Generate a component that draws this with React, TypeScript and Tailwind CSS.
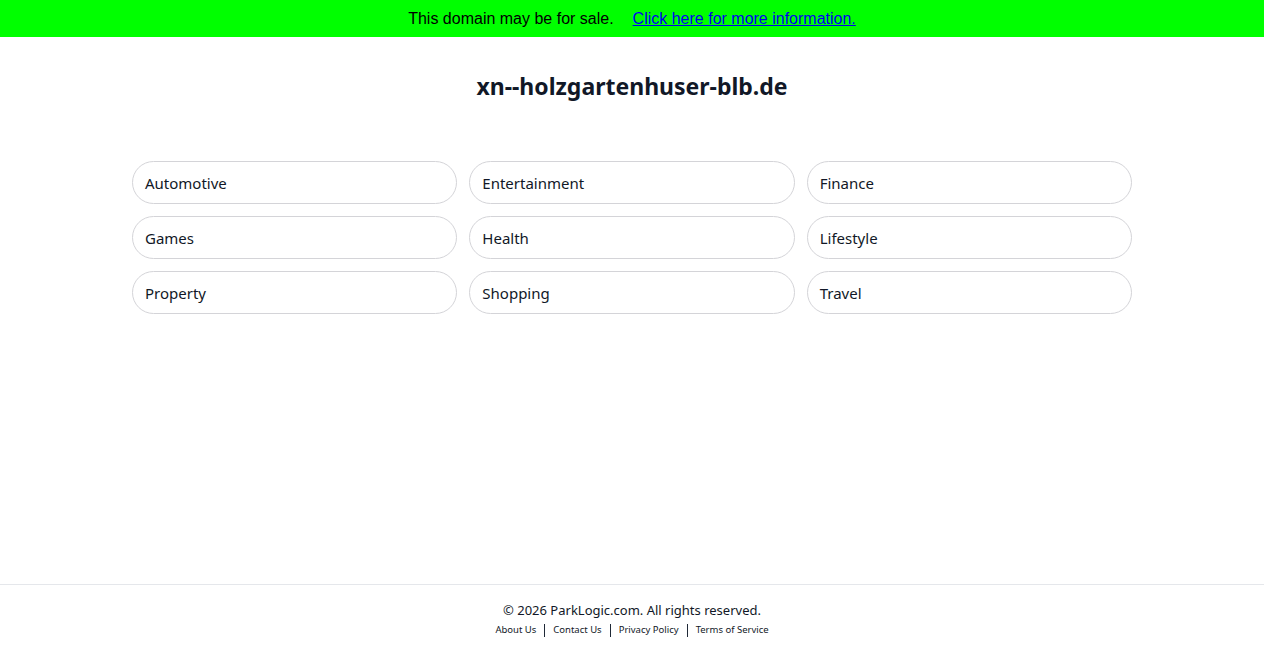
import React from "react";

const cats = ["Automotive", "Entertainment", "Finance", "Games", "Health", "Lifestyle", "Property", "Shopping", "Travel"];

export default function App() {
  return (
    <div className="min-h-screen flex flex-col bg-white" style={{ fontFamily: '"Noto Sans", "Open Sans", sans-serif' }}>
      <div className="h-[37px] bg-[#00ff00] flex items-center justify-center text-[16px] text-black" style={{ fontFamily: '"Liberation Sans", Arial, sans-serif' }}>
        <span>This domain may be for sale.</span>
        <a href="#" className="ml-[19px] text-[#0000ee] underline">Click here for more information.</a>
      </div>
      <h1 className="mt-[33px] text-center text-[23px] font-bold text-[#111827] leading-[32px]">xn--holzgartenhuser-blb.de</h1>
      <div className="mt-[59px] mx-auto w-[1000px] grid grid-cols-3 gap-x-[12px] gap-y-[12px]">
        {cats.map((c) => (
          <div key={c} className="h-[43px] rounded-full border border-[#d4d4d8] flex items-center pl-[12px] pt-[1px] text-[15px] text-[#111827]">
            {c}
          </div>
        ))}
      </div>
      <div className="flex-1" />
      <footer className="border-t border-[#e5e7eb] pt-[15px] pb-[16px] flex flex-col items-center">
        <div className="text-[13px] text-[#111827] leading-[20px]">© 2026 ParkLogic.com. All rights reserved.</div>
        <div className="flex items-center text-[9.5px] text-[#111827] leading-[14px] mt-[3px]">
          <a href="#" className="px-[8px]">About Us</a>
          <span className="w-[1px] h-[13px] bg-[#1f2937]" />
          <a href="#" className="px-[8px]">Contact Us</a>
          <span className="w-[1px] h-[13px] bg-[#1f2937]" />
          <a href="#" className="px-[8px]">Privacy Policy</a>
          <span className="w-[1px] h-[13px] bg-[#1f2937]" />
          <a href="#" className="px-[8px]">Terms of Service</a>
        </div>
      </footer>
    </div>
  );
}
